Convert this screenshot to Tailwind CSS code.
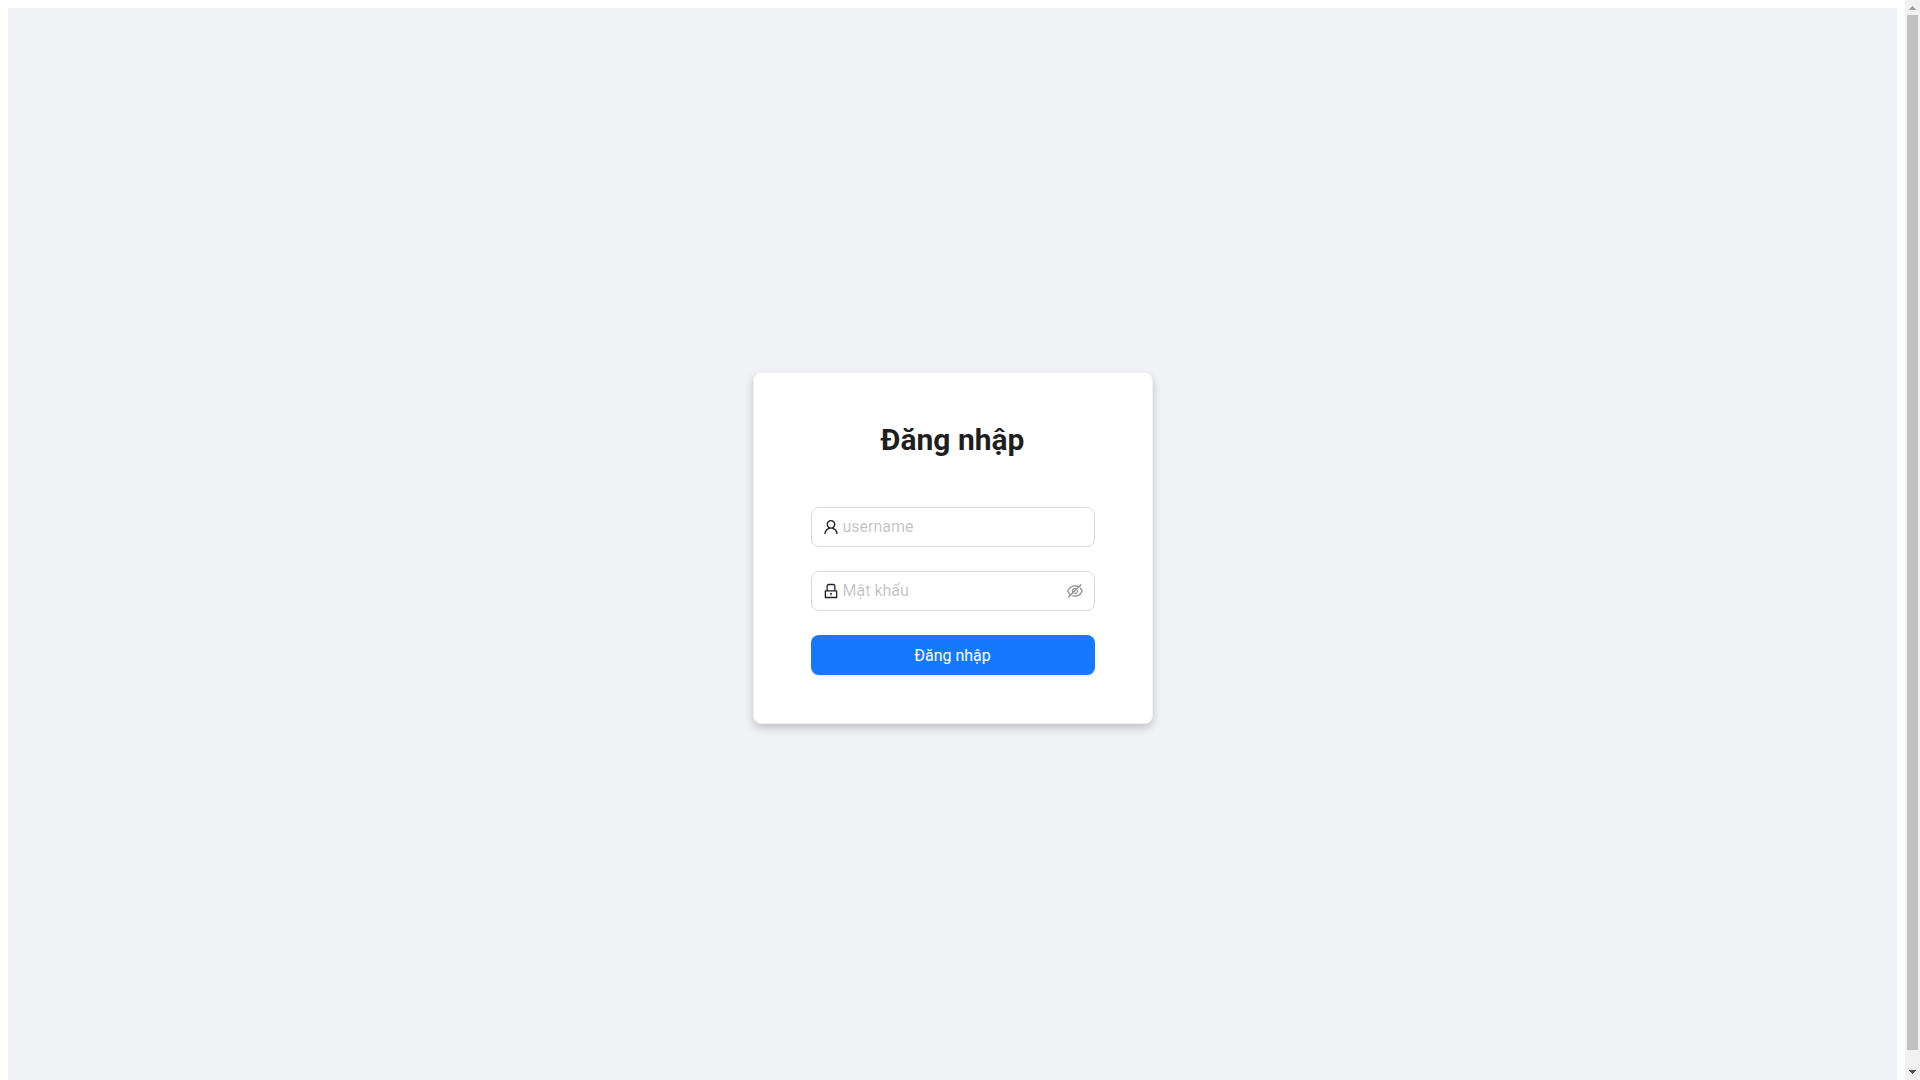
<!DOCTYPE html>
<html lang="vi">
<head>
  <meta charset="UTF-8" />
  <meta name="viewport" content="width=device-width, initial-scale=1.0" />
  <title>Đăng nhập</title>
  <script src="https://cdn.jsdelivr.net/npm/@tailwindcss/browser@4"></script>
</head>
<body class="flex h-screen overflow-hidden bg-white font-[Roboto,sans-serif] text-black/88">

  <div id="page" class="h-screen flex-1 overflow-y-auto p-2 [scrollbar-width:none]">
    <main class="flex min-h-screen items-center justify-center bg-[#f0f2f5]">
      <section class="w-[400px] rounded-lg border border-[#f0f0f0] bg-white px-[57px] py-12 shadow-[0_4px_8px_rgba(0,0,0,0.2)]">
        <h1 class="mb-12 text-center text-[30px] leading-[38px] font-bold">Đăng nhập</h1>

        <form class="flex flex-col gap-6 text-base">
          <div class="flex h-10 items-center gap-1 rounded-lg border border-[#d9d9d9] px-[11px]">
            <label for="username" aria-label="username">
              <svg class="size-4" viewBox="64 64 896 896" fill="currentColor"><path d="M858.5 763.6a374 374 0 00-80.6-119.5 375.63 375.63 0 00-119.5-80.6c-.4-.2-.8-.3-1.2-.5C719.5 518 760 444.7 760 362c0-137-111-248-248-248S264 225 264 362c0 82.700 40.500 156 102.800 201.100-.4.2-.8.3-1.200.5-44.800 18.900-85 46-119.500 80.600a375.630 375.630 0 00-80.600 119.500A371.700 371.700 0 00136 901.800a8 8 0 008 8.200h60c4.400 0 7.900-3.500 8-7.800 2-77.200 33-149.500 87.800-204.300 56.700-56.700 132-87.900 212.200-87.900s155.500 31.200 212.200 87.900C779 752.700 810 825 812 902.200c.1 4.400 3.600 7.800 8 7.800h60a8 8 0 008-8.200c-1-47.800-10.900-94.300-29.500-138.200zM512 534c-45.900 0-89.100-17.900-121.600-50.400S340 407.900 340 362c0-45.900 17.900-89.100 50.400-121.600S466.100 190 512 190s89.100 17.900 121.600 50.400S684 316.100 684 362c0 45.900-17.900 89.100-50.400 121.600S557.900 534 512 534z" /></svg>
            </label>
            <input id="username" type="text" name="username" placeholder="username" class="min-w-0 flex-1 outline-none placeholder:text-black/25" />
          </div>

          <div class="flex h-10 items-center gap-1 rounded-lg border border-[#d9d9d9] px-[11px]">
            <label for="password" aria-label="Mật khẩu">
              <svg class="size-4" viewBox="64 64 896 896" fill="currentColor"><path d="M832 464h-68V240c0-70.700-57.300-128-128-128H388c-70.700 0-128 57.300-128 128v224h-68c-17.700 0-32 14.300-32 32v384c0 17.700 14.300 32 32 32h640c17.700 0 32-14.300 32-32V496c0-17.700-14.300-32-32-32zM332 240c0-30.900 25.100-56 56-56h248c30.900 0 56 25.100 56 56v224H332V240zm460 600H232V536h560v304zM484 701v53c0 4.400 3.600 8 8 8h40c4.400 0 8-3.600 8-8v-53a48.010 48.010 0 10-56 0z" /></svg>
            </label>
            <input id="password" type="password" name="password" placeholder="Mật khẩu" class="min-w-0 flex-1 outline-none placeholder:text-black/25" />
            <button type="button" id="toggle" aria-label="Hiện mật khẩu" class="cursor-pointer text-black/45">
              <svg class="size-4" viewBox="64 64 896 896" fill="currentColor"><path d="M942.200 486.200Q889.470 375.110 816.700 305l-50.880 50.880C807.310 395.530 843.450 447.400 874.700 512 791.500 684.200 673.400 766 512 766q-72.670 0-133.870-22.380L323 798.750Q408 838 512 838q288.300 0 430.200-300.300a60.290 60.290 0 000-51.500zm-63.570-320.640L836 122.880a8 8 0 00-11.320 0L715.310 232.200Q624.860 186 512 186q-288.300 0-430.200 300.300a60.300 60.300 0 000 51.500q56.690 119.400 136.500 191.410L112.480 835a8 8 0 000 11.310L155.170 889a8 8 0 0011.310 0l712.150-712.120a8 8 0 000-11.320zM149.300 512C232.600 339.800 350.700 258 512 258c54.540 0 104.130 9.360 149.120 28.390l-70.300 70.300a176 176 0 00-238.130 238.130l-83.420 83.420C223.100 637.490 183.300 582.280 149.300 512zm246.700 0a112.110 112.110 0 01146.200-106.690L401.310 546.200A112 112 0 01396 512z" /><path d="M508 624c-3.460 0-6.870-.16-10.250-.47l-52.820 52.820a176.090 176.090 0 00227.420-227.420l-52.820 52.820c.31 3.380.47 6.790.47 10.250a111.940 111.940 0 01-112 112z" /></svg>
            </button>
          </div>

          <button type="submit" class="h-10 cursor-pointer rounded-lg bg-[#1677ff] pt-0.5 text-white shadow-[0_2px_0_rgba(5,145,255,0.1)]">Đăng nhập</button>
        </form>
      </section>
    </main>
  </div>

  <!-- Scrollbar -->
  <div class="flex h-screen w-[15px] flex-col bg-[#f1f1f1]">
    <button type="button" id="scrollUp" aria-label="Cuộn lên" class="h-[15px] text-[#a3a3a3]">
      <svg class="size-[15px]" viewBox="0 0 15 15" fill="currentColor" shape-rendering="crispEdges"><path d="M7 6h1v1h1v1h1v1h1v1H4V9h1V8h1V7h1z" /></svg>
    </button>
    <div class="flex-1 px-0.5">
      <div class="h-[98.6%] bg-[#c1c1c1]"></div>
    </div>
    <button type="button" id="scrollDown" aria-label="Cuộn xuống" class="h-[15px] text-[#505050]">
      <svg class="size-[15px]" viewBox="0 0 15 15" fill="currentColor" shape-rendering="crispEdges"><path d="M4 5h7v1h-1v1H9v1H8v1H7V8H6V7H5V6H4z" /></svg>
    </button>
  </div>

  <script>
    const page = document.getElementById('page');
    const password = document.getElementById('password');

    document.getElementById('toggle').addEventListener('click', () => {
      password.type = password.type === 'password' ? 'text' : 'password';
    });
    document.getElementById('scrollUp').addEventListener('click', () => page.scrollBy(0, -40));
    document.getElementById('scrollDown').addEventListener('click', () => page.scrollBy(0, 40));
  </script>
</body>
</html>
